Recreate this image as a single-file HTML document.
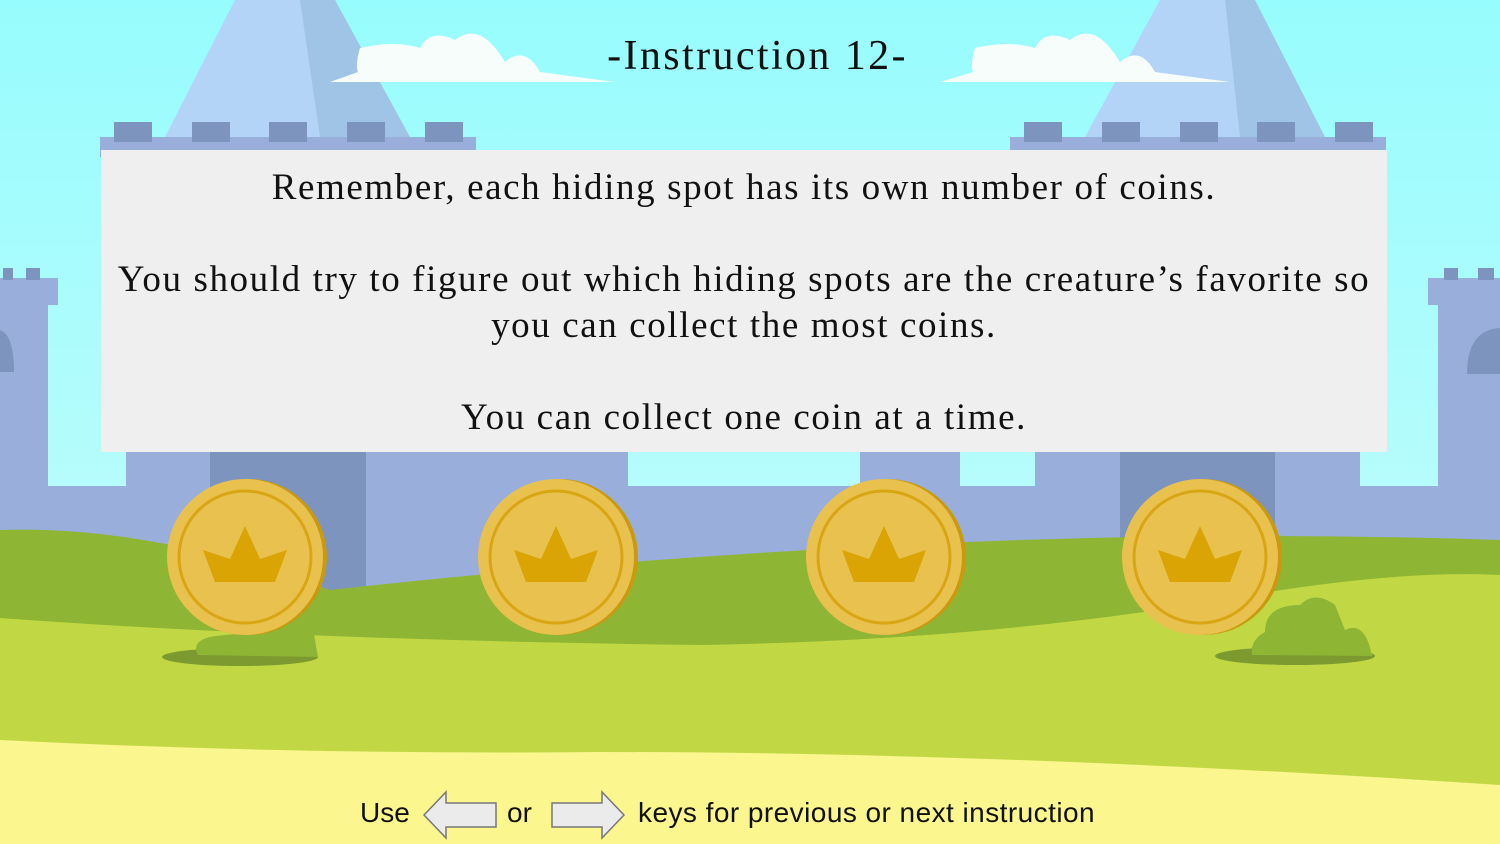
<!DOCTYPE html>
<html><head><meta charset="utf-8"><style>
html,body{margin:0;padding:0;width:1500px;height:844px;overflow:hidden}
.s{position:absolute;left:0;top:0}
.t{position:absolute;font-family:"Liberation Serif",serif;color:#111;text-align:center;white-space:nowrap}
.b{position:absolute;font-family:"Liberation Sans",sans-serif;font-size:28px;color:#111}
</style></head><body>
<svg class="s" width="1500" height="844" viewBox="0 0 1500 844">
<defs>
<linearGradient id="sky" x1="0" y1="0" x2="0" y2="1"><stop offset="0" stop-color="#97fcfd"/><stop offset="1" stop-color="#cdfcfc"/></linearGradient>
<g id="coin">
<circle cx="4" cy="0" r="78" fill="#c99a10"/>
<circle cx="0" cy="0" r="78" fill="#e9c14f"/>
<circle cx="0" cy="0" r="66" fill="none" stroke="#d8a614" stroke-width="3"/>
<path d="M-42,-7 L-15,2 L0,-31 L15,2 L42,-7 L30,25 L-30,25 Z" fill="#d9a404"/>
</g>
</defs>
<rect width="1500" height="844" fill="url(#sky)"/>
<path d="M165,137 L235,0 L300,0 L410,137 Z" fill="#b3d3f7"/>
<path d="M300,0 L335,0 L410,137 L320,137 Z" fill="#a0c4e6"/>
<path d="M1085,137 L1160,0 L1225,0 L1325,137 Z" fill="#b3d3f7"/>
<path d="M1225,0 L1255,0 L1325,137 L1240,137 Z" fill="#a0c4e6"/>
<path d="M330,82 L615,82 L540,72 Q525,45 505,62 Q480,20 455,40 Q430,28 420,48 Q395,40 360,48 Q355,65 358,72 Z" fill="#f6fdfb"/>
<path d="M940,82 L1230,82 L1155,72 Q1140,45 1120,62 Q1095,20 1070,40 Q1045,28 1035,48 Q1010,40 975,48 Q970,65 973,72 Z" fill="#f6fdfb"/>
<rect x="100" y="137" width="376" height="20" fill="#9aaedb"/>
<g fill="#7d94bf"><rect x="114" y="122" width="38" height="20"/><rect x="192" y="122" width="38" height="20"/><rect x="269" y="122" width="38" height="20"/><rect x="347" y="122" width="38" height="20"/><rect x="425" y="122" width="38" height="20"/></g>
<rect x="1010" y="137" width="376" height="20" fill="#9aaedb"/>
<g fill="#7d94bf"><rect x="1024" y="122" width="38" height="20"/><rect x="1102" y="122" width="38" height="20"/><rect x="1180" y="122" width="38" height="20"/><rect x="1257" y="122" width="38" height="20"/><rect x="1335" y="122" width="38" height="20"/></g>
<rect x="0" y="278" width="58" height="27" fill="#9aaedb"/><rect x="0" y="305" width="48" height="300" fill="#9aaedb"/>
<rect x="3" y="268" width="10" height="12" fill="#7d94bf"/><rect x="26" y="268" width="14" height="12" fill="#7d94bf"/>
<path d="M0,330 Q14,335 14,372 L0,372 Z" fill="#7d94bf"/>
<rect x="1428" y="278" width="72" height="27" fill="#9aaedb"/><rect x="1438" y="305" width="62" height="300" fill="#9aaedb"/>
<rect x="1444" y="268" width="14" height="12" fill="#7d94bf"/><rect x="1478" y="268" width="16" height="12" fill="#7d94bf"/>
<path d="M1467,374 Q1467,330 1500,328 L1500,374 Z" fill="#7d94bf"/>
<rect x="48" y="486" width="1392" height="120" fill="#9aaedb"/>
<rect x="126" y="440" width="502" height="170" fill="#9aaedb"/>
<rect x="860" y="440" width="100" height="170" fill="#9aaedb"/>
<rect x="1035" y="440" width="325" height="170" fill="#9aaedb"/>
<rect x="628" y="497" width="232" height="120" fill="#9aaedb"/>
<rect x="210" y="440" width="156" height="160" fill="#7d94bf"/>
<rect x="1120" y="440" width="155" height="160" fill="#7d94bf"/>
<path d="M0,530 Q150,525 330,590 Q600,560 900,545 Q1200,530 1500,540 L1500,844 L0,844 Z" fill="#8fb534"/>
<path d="M0,618 Q300,640 700,645 Q1000,640 1250,595 Q1400,570 1500,575 L1500,844 L0,844 Z" fill="#c1d844"/>
<path d="M0,740 Q300,755 600,752 Q1000,752 1500,785 L1500,844 L0,844 Z" fill="#fbf68e"/>
<ellipse cx="240" cy="657" rx="78" ry="9" fill="#7d9a30"/>
<path d="M198,655 Q190,640 215,636 L300,628 Q312,620 315,640 L318,657 Z" fill="#8fb534"/>
<ellipse cx="1295" cy="656" rx="80" ry="9" fill="#7d9a30"/>
<path d="M1252,655 Q1250,640 1265,632 Q1265,605 1300,605 Q1315,590 1335,605 L1345,630 Q1365,620 1372,656 Z" fill="#8fb534"/>
<rect x="101" y="150" width="1286" height="302" fill="#efefef"/>
<use href="#coin" x="245" y="557"/>
<use href="#coin" x="556" y="557"/>
<use href="#coin" x="884" y="557"/>
<use href="#coin" x="1200" y="557"/>
<path d="M424,815 L446,792 L446,803 L496,803 L496,827 L446,827 L446,838 Z" fill="#ebebeb" stroke="#777" stroke-width="1.5"/>
<path d="M624,815 L602,792 L602,803 L552,803 L552,827 L602,827 L602,838 Z" fill="#ebebeb" stroke="#777" stroke-width="1.5"/>
</svg>
<div class="t" style="left:0;width:1515px;top:32px;font-size:42px;letter-spacing:2.4px">-Instruction 12-</div>
<div class="t" style="left:101px;width:1286px;top:165px;font-size:37px;line-height:46px;letter-spacing:1.6px">Remember, each hiding spot has its own number of coins.<br><br>You should try to figure out which hiding spots are the creature’s favorite so<br>you can collect the most coins.<br><br>You can collect one coin at a time.</div>
<div class="b" style="left:360px;top:797px">Use</div>
<div class="b" style="left:507px;top:797px">or</div>
<div class="b" style="left:638px;top:797px;letter-spacing:0.45px">keys for previous or next instruction</div>
</body></html>
